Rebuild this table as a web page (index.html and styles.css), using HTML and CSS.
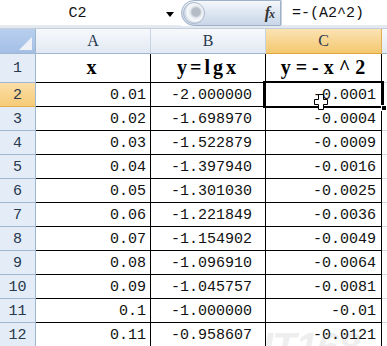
FILE: index.html
```html
<!DOCTYPE html>
<html>
<head>
<meta charset="utf-8">
<link rel="stylesheet" href="styles.css">
</head>
<body>
<div class="app">
  <div class="fbar">
    <div class="namebox"><span class="ref">C2</span><span class="arrow"></span></div>
    <div class="fxbtn"><span class="knob"></span><span class="fx">f<span class="fxx">x</span></span></div>
    <div class="formula">=-(A2^2)</div>
  </div>
  <div class="strip"></div>
  <div class="sheet">
    <div class="corner"><span class="tri"></span></div>
    <div class="ch">A</div>
    <div class="ch">B</div>
    <div class="ch sel">C</div>
    <div class="ch extra"></div>

    <div class="rh">1</div>
    <div class="c a hd">x</div>
    <div class="c b hd">y=lgx</div>
    <div class="c cc hd wide">y=-x^2</div>
    <div class="c ex"></div>

    <div class="rh sel">2</div>
    <div class="c a">0.01</div>
    <div class="c b">-2.000000</div>
    <div class="c cc">-0.0001</div>
    <div class="c ex"></div>

    <div class="rh">3</div>
    <div class="c a">0.02</div>
    <div class="c b">-1.698970</div>
    <div class="c cc">-0.0004</div>
    <div class="c ex"></div>

    <div class="rh">4</div>
    <div class="c a">0.03</div>
    <div class="c b">-1.522879</div>
    <div class="c cc">-0.0009</div>
    <div class="c ex"></div>

    <div class="rh">5</div>
    <div class="c a">0.04</div>
    <div class="c b">-1.397940</div>
    <div class="c cc">-0.0016</div>
    <div class="c ex"></div>

    <div class="rh">6</div>
    <div class="c a">0.05</div>
    <div class="c b">-1.301030</div>
    <div class="c cc">-0.0025</div>
    <div class="c ex"></div>

    <div class="rh">7</div>
    <div class="c a">0.06</div>
    <div class="c b">-1.221849</div>
    <div class="c cc">-0.0036</div>
    <div class="c ex"></div>

    <div class="rh">8</div>
    <div class="c a">0.07</div>
    <div class="c b">-1.154902</div>
    <div class="c cc">-0.0049</div>
    <div class="c ex"></div>

    <div class="rh">9</div>
    <div class="c a">0.08</div>
    <div class="c b">-1.096910</div>
    <div class="c cc">-0.0064</div>
    <div class="c ex"></div>

    <div class="rh">10</div>
    <div class="c a">0.09</div>
    <div class="c b">-1.045757</div>
    <div class="c cc">-0.0081</div>
    <div class="c ex"></div>

    <div class="rh">11</div>
    <div class="c a">0.1</div>
    <div class="c b">-1.000000</div>
    <div class="c cc">-0.01</div>
    <div class="c ex"></div>

    <div class="rh">12</div>
    <div class="c a">0.11</div>
    <div class="c b">-0.958607</div>
    <div class="c cc">-0.0121</div>
    <div class="c ex"></div>

    <div class="active"><span class="handle"></span></div>
    <svg class="cursor" width="14" height="16" viewBox="0 0 14 16"><path d="M4.5 0.5 H9.5 V5.5 H13.5 V10.5 H9.5 V15.5 H4.5 V10.5 H0.5 V5.5 H4.5 Z" fill="#fff" stroke="#000" stroke-width="1"/></svg>
    <div class="wm">IT168<span class="wmc">.com</span></div>
  </div>
</div>
</body>
</html>
```

FILE: styles.css
```css
* { box-sizing: border-box; }
html, body { margin: 0; padding: 0; }
body { width: 387px; height: 346px; overflow: hidden; background: #fff; font-family: "Liberation Mono", "DejaVu Sans Mono", monospace; }
.app { width: 387px; height: 346px; overflow: hidden; }

.fbar { display: flex; height: 26px; background: #fff; }
.namebox { width: 181px; position: relative; display: flex; align-items: center; justify-content: center; background: #fff; border-bottom: 1px solid #e6ebf2; }
.ref { font-size: 15px; color: #111; margin-left: -26px; margin-top: 2px; }
.arrow { position: absolute; left: 166px; top: 12px; width: 0; height: 0; border-left: 4px solid transparent; border-right: 4px solid transparent; border-top: 5px solid #000; }

.fxbtn { width: 100px; height: 26px; border: 1px solid #9fb1c9; border-radius: 13px 0 0 13px; background: linear-gradient(#f4f7fb 0%, #dfe7f2 45%, #c9d6e8 100%); display: flex; align-items: center; justify-content: space-between; padding: 0 4px 0 1px; }
.knob { width: 22px; height: 22px; border-radius: 50%; background: radial-gradient(circle at 60% 45%, #b5bcc6 0 4px, #e9edf2 6px, #f7f9fb 9px, #d2dbe7 11px); border: 1px solid #aab8cb; }
.fx { font-family: "Liberation Serif", serif; font-style: italic; font-weight: bold; font-size: 16px; color: #333; letter-spacing: -1px; padding-right: 2px; }
.fxx { font-size: 12px; }
.formula { flex: 1; border-left: 1px solid #c9d3df; border-bottom: 1px solid #e6ebf2; font-size: 15px; color: #111; padding-left: 10px; display: flex; align-items: center; padding-top: 2px; }

.strip { height: 3px; background: #e4e9f0; border-bottom: 1px solid #c3cfdd; }

.sheet { position: relative; display: grid; grid-template-columns: 36px 115px 115px 116px 5px; grid-template-rows: 25px 29px repeat(11, 24px); }

.corner { background: linear-gradient(#b8cfee, #a4bfe6); border-right: 1px solid #9eb6ce; border-bottom: 1px solid #9eb6ce; position: relative; }
.tri { position: absolute; right: 3px; bottom: 3px; width: 0; height: 0; border-left: 13px solid transparent; border-bottom: 13px solid #eef2f7; }

.ch { background: linear-gradient(#f7f9fc, #e2e9f3); border-right: 1px solid #c5d3e3; border-bottom: 1px solid #9eb6ce; display: flex; align-items: center; justify-content: center; font-family: "Liberation Serif", serif; font-size: 16px; color: #27384f; }
.ch.sel { background: linear-gradient(#fbe3b4, #f4c86f); border-right-color: #e2ac4f; border-bottom-color: #e2a63e; }
.ch.extra { border-right: 0; }

.rh { background: #e4ecf7; border-right: 1px solid #9eb6ce; border-bottom: 1px solid #9eb6ce; display: flex; align-items: center; justify-content: center; font-size: 15px; color: #27384f; padding-top: 1px; }
.rh.sel { background: linear-gradient(#fbdea6, #f6cb79); border-bottom-color: #e2ac4f; }

.c { border-right: 1px solid #000; border-bottom: 1px solid #000; display: flex; align-items: center; justify-content: flex-end; font-size: 15px; color: #111; padding-right: 4px; padding-top: 1px; }
.c.b { padding-right: 13px; }
.c.cc { padding-right: 5px; }
.c.ex { border-right: 0; border-bottom: 1px solid #d0d7e5; }
.c.hd { justify-content: center; align-items: flex-end; padding: 0 0 3px 0; font-family: "Liberation Serif", serif; font-weight: bold; font-size: 20px; letter-spacing: 3px; color: #000; }
.c.hd.wide { letter-spacing: 5px; padding-left: 4px; }

.active { position: absolute; left: 263px; top: 52px; width: 121px; height: 27px; border: 2px solid #000; pointer-events: none; }
.handle { position: absolute; right: -5px; bottom: -5px; width: 6px; height: 6px; background: #000; border: 1px solid #fff; }
.cursor { position: absolute; left: 314px; top: 65px; }

.wm { position: absolute; left: 262px; top: 296px; font-family: "Liberation Sans", sans-serif; font-style: italic; font-weight: bold; font-size: 40px; color: rgba(120,120,120,0.14); letter-spacing: -1px; pointer-events: none; }
.wmc { font-size: 10px; letter-spacing: 0; }
```
